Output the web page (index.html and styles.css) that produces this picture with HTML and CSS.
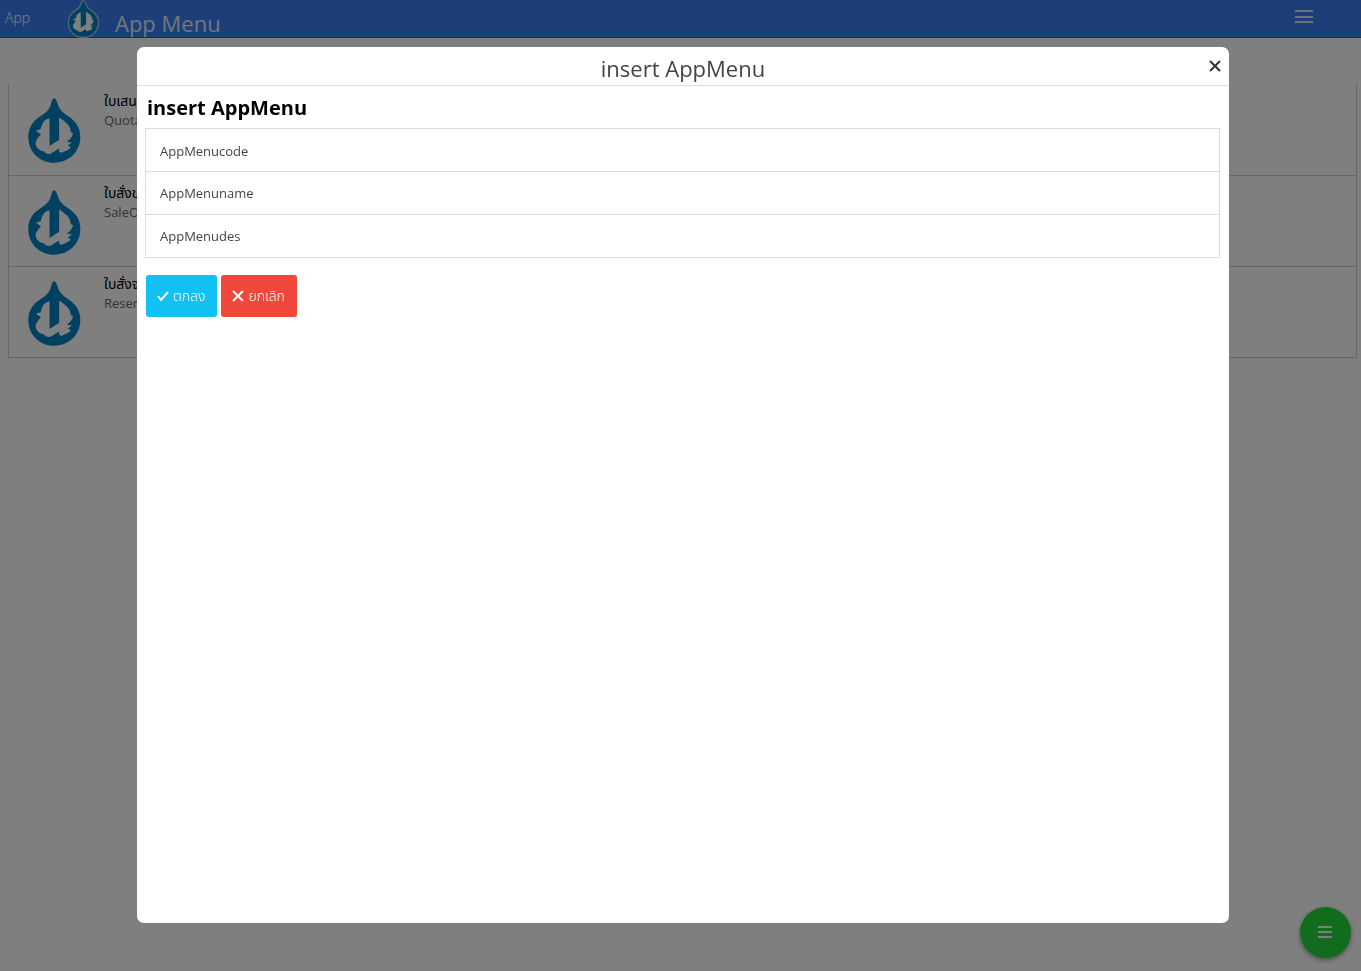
FILE: index.html
```html
<!DOCTYPE html>
<html lang="th">
<head>
<meta charset="utf-8">
<meta name="viewport" content="width=device-width, initial-scale=1">
<title>App Menu</title>
<link rel="stylesheet" href="styles.css">
</head>
<body>
<svg class="symbols" aria-hidden="true">
  <symbol id="drop" viewBox="82 54 160 196" overflow="visible">
    <path class="drop-body" d="M161 55C166 55 169 64 173 76C180 96 196 103 213 116C231 131 240 150 240 171C240 216 206 249 161 249C117 249 83 216 83 172C83 149 92 130 110 116C128 103 143 97 150 76C154 63 156 55 161 55Z"/>
    <path class="drop-leaf" d="M147 115C132 118 124 130 121 147C116 151 111 151 106 152C111 158 117 161 121 163C113 173 105 180 105 192C106 204 117 213 130 215C133 221 138 222 144 223L150 222L176 206L176 216C181 219 187 220 190 216C198 213 206 210 211 204C210 201 207 199 202 197L216 187C207 188 202 188 200 184C208 180 215 173 218 160C212 159 210 156 210 150C209 138 194 124 176 113L176 180L147 199Z"/>
  </symbol>
</svg>

<header class="bar">
  <a class="bar-back" href="#">App</a>
  <svg class="bar-logo" aria-hidden="true"><use href="#drop"/></svg>
  <h1 class="bar-title">App Menu</h1>
  <button class="bar-menu" type="button" aria-label="Menu">
    <svg width="18" height="14" viewBox="0 0 18 14"><path d="M0 1h18M0 7h18M0 12h18"/></svg>
  </button>
</header>

<main class="page">
  <ul class="list">
    <li class="item">
      <svg class="item-logo" aria-hidden="true"><use href="#drop"/></svg>
      <div><h2 class="item-name">ใบเสน</h2><p class="item-des">Quota</p></div>
    </li>
    <li class="item">
      <svg class="item-logo" aria-hidden="true"><use href="#drop"/></svg>
      <div><h2 class="item-name">ใบสั่งข</h2><p class="item-des">SaleO</p></div>
    </li>
    <li class="item">
      <svg class="item-logo" aria-hidden="true"><use href="#drop"/></svg>
      <div><h2 class="item-name">ใบสั่งจ</h2><p class="item-des">Reser</p></div>
    </li>
  </ul>
</main>

<button class="fab" type="button" aria-label="Actions">
  <svg width="14" height="12" viewBox="0 0 14 12"><path d="M0 1h14M0 6h14M0 11h14"/></svg>
</button>

<div class="backdrop">
  <section class="modal" role="dialog" aria-modal="true" aria-labelledby="modal-title">
    <header class="modal-bar">
      <h2 class="modal-title" id="modal-title">insert AppMenu</h2>
      <button class="modal-close" type="button" aria-label="Close">
        <svg width="12" height="12" viewBox="0 0 12 12"><path d="M1 1l10 10M11 1L1 11"/></svg>
      </button>
    </header>
    <form class="form">
      <h3 class="form-title">insert AppMenu</h3>
      <div class="fields">
        <input class="field" type="text" aria-label="AppMenucode" placeholder="AppMenucode">
        <input class="field" type="text" aria-label="AppMenuname" placeholder="AppMenuname">
        <input class="field" type="text" aria-label="AppMenudes" placeholder="AppMenudes">
      </div>
      <div class="actions">
        <button class="btn btn-ok" type="button">
          <svg width="12" height="12" viewBox="0 0 12 12"><path d="M1 6l3 4L11 2"/></svg>
          <span>ตกลง</span>
        </button>
        <button class="btn btn-cancel" type="button">
          <svg width="12" height="12" viewBox="0 0 12 12"><path d="M1 1l10 10M11 1L1 11"/></svg>
          <span>ยกเลิก</span>
        </button>
      </div>
    </form>
  </section>
</div>
</body>
</html>
```
FILE: styles.css
```css
* { box-sizing: border-box; }

body {
  margin: 0;
  min-height: 100vh;
  background: #fff;
  color: #000;
  font-family: "Open Sans", "Noto Sans", "Noto Sans Thai", sans-serif;
  font-size: 14px;
}

h1, h2, h3, p, ul { margin: 0; padding: 0; font-weight: 400; }
button { border: 0; padding: 0; background: none; font: inherit; cursor: pointer; }
svg { display: block; flex: none; }
svg path { fill: none; stroke: currentColor; stroke-width: 2; }

.symbols { position: absolute; width: 0; height: 0; }
svg .drop-body { fill: #0080c0; stroke: var(--halo, none); stroke-width: 14; paint-order: stroke; }
svg .drop-leaf { fill: #fff; stroke: none; }

.bar {
  display: flex;
  align-items: center;
  height: 38px;
  padding: 0 48px 0 5px;
  background: #387ef5;
  border-bottom: 1px solid #0c60ee;
  color: #fff;
}
.bar-back { width: 62px; padding-bottom: 2px; color: inherit; font-weight: 300; text-decoration: none; }
.bar-logo { --halo: #a8c8e8; width: 33px; height: 36px; overflow: visible; }
.bar-title { flex: 1; padding: 8px 0 0 15px; font-size: 22px; line-height: 28px; color: #e4ecfa; }
.bar-menu { color: #dde6f5; padding-bottom: 4px; }

.page { padding: 46px 4px 0 8px; }
.list { border: 1px solid #ccc; border-top: 0; list-style: none; }
.item { display: flex; gap: 23px; height: 91px; padding: 14px 19px; }
.item + .item { border-top: 1px solid #ccc; }
.item-logo { width: 53px; height: 65px; }
.item > div { margin-top: -7px; }
.item-name { font-size: 14px; line-height: 20px; }
.item-des { font-size: 13px; line-height: 18px; color: #666; }

.fab {
  position: fixed;
  right: 10px;
  bottom: 13px;
  display: grid;
  place-items: center;
  width: 51px;
  height: 51px;
  padding: 0 2px 2px 0;
  border-radius: 50%;
  background: #22d83c;
  box-shadow: 0 2px 5px rgba(0, 0, 0, .4);
  color: #fff;
}

.backdrop {
  position: fixed;
  inset: 0;
  display: flex;
  padding: 47px 132px 48px 137px;
  background: rgba(0, 0, 0, .5);
}
.modal { flex: 1; overflow: hidden; border-radius: 7px; background: #fff; }
.modal-bar {
  display: grid;
  grid-template-columns: 1fr auto 1fr;
  align-items: center;
  height: 39px;
  padding: 0 8px;
  border-bottom: 1px solid #ddd;
}
.modal-title { grid-column: 2; padding-top: 4px; color: #444; font-size: 22px; line-height: 30px; }
.modal-close { justify-self: end; color: #333; }

.form { padding: 8px 9px 8px 8px; }
.form-title { padding-left: 2px; font-size: 20px; line-height: 28px; font-weight: 700; margin-bottom: 6px; }
.fields { border: 1px solid #ddd; }
.field {
  display: block;
  width: 100%;
  height: 42px;
  padding: 2px 14px 0;
  border: 0;
  background: #fff;
  color: #444;
  font: inherit;
  font-size: 13px;
}
.field + .field { height: 43px; padding-top: 0; border-top: 1px solid #ddd; }
.field::placeholder { color: #444; opacity: 1; }

.actions { display: flex; gap: 4px; padding: 17px 1px; }
.btn {
  display: flex;
  align-items: center;
  gap: 4px;
  height: 42px;
  padding: 0 12px 0 11px;
  border-radius: 3px;
  color: #fff;
  font-weight: 300;
}
.btn-ok { background: #11c1f3; }
.btn-cancel { background: #ef473a; }
```
